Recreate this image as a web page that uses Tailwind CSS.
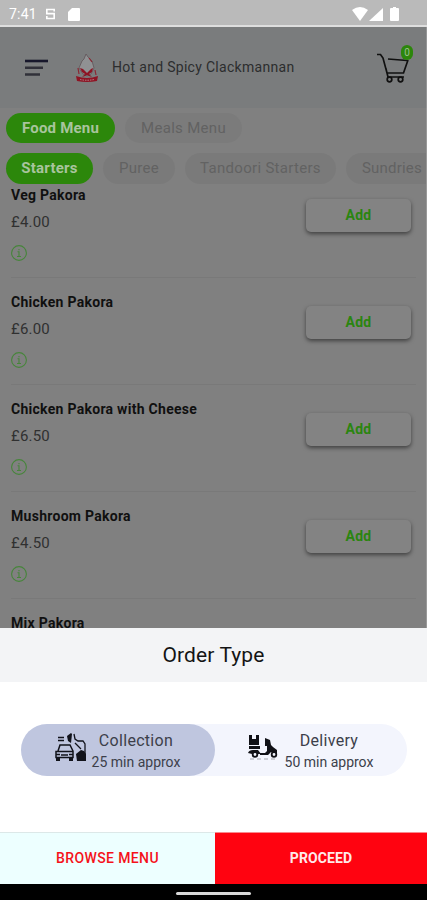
<!DOCTYPE html>
<html lang="en">

<head>
  <meta charset="UTF-8">
  <meta name="viewport" content="width=device-width, initial-scale=1.0">
  <title>Hot and Spicy Clackmannan</title>
  <script src="https://cdn.jsdelivr.net/npm/@tailwindcss/browser@4"></script>
</head>

<body class="h-[900px] w-[427px] overflow-hidden bg-[#808080] font-[Roboto,sans-serif] flex flex-col">

  <!-- Status bar -->
  <div class="h-[27px] shrink-0 bg-[#bababa] border-b-2 border-[#dedede] flex items-center pl-[9px] pr-[27px] pt-[3px] text-white">
    <span class="text-[14px] leading-none tracking-[0.2px]">7:41</span>
    <svg class="ml-[9px] w-[9px] h-[12px]" viewBox="0 0 11 13" fill="none" stroke="#fff" stroke-width="2">
      <path d="M10 3.500V1H1v5h9v6H1V9" />
    </svg>
    <svg class="ml-[13px] w-[12px] h-[13px]" viewBox="0 0 12 13" fill="#fff">
      <path d="M4 0h7q1 0 1 1v11q0 1-1 1H1q-1 0-1-1V4z" />
    </svg>
    <svg class="ml-auto w-[16px] h-[14px]" viewBox="0 0 16 14" fill="#fff">
      <path d="M0 3Q8-3 16 3L8 14z" />
    </svg>
    <svg class="ml-[1px] w-[14px] h-[13px]" viewBox="0 0 14 13" fill="#fff">
      <path d="M14 0v13H0z" />
    </svg>
    <svg class="ml-[7px] mr-[1px] w-[9px] h-[14px]" viewBox="0 0 9 14" fill="#fff">
      <path d="M3 0h3v1h2q1 0 1 1v11q0 1-1 1H1q-1 0-1-1V2q0-1 1-1h2z" />
    </svg>
  </div>

  <!-- Header -->
  <header class="h-[81px] shrink-0 bg-[#7a7c7d] border-r border-[#959697] flex items-center pl-[25px] pr-[12px]">
    <svg class="w-[24px] h-[18px]" viewBox="0 0 24 18" stroke-width="2.600">
      <path d="M0 2h23" stroke="#17172b" />
      <path d="M0 8.800h18M0 15.500h15" stroke="#303039" />
    </svg>
    <svg class="ml-[26px] w-[24px] h-[30px]" viewBox="0 0 24 30">
      <path d="M9 6l2-5 2 3 4 4 2 7-3 6-4 2-4-2-4-6 3-7z" fill="#909193" stroke="#5b4e52" stroke-width=".7" />
      <path d="M14 5l3 4M3 15l1 6M20 17l1 5" stroke="#8c2733" stroke-width="1.200" />
      <path d="M5 15l3 1 4 4 4-4 2-1-1 4-3 2 3 3-3-1-2-1-2 1-3 1 3-3-3-2z" fill="#8e1424" />
      <path d="M1 23q11 4 22 0l-1 5q-10 2-20 0z" fill="#8e1424" />
      <path d="M5 26.500q7 1.500 14 0" stroke="#b9a0a4" stroke-width=".8" stroke-dasharray="1.500 1" fill="none" />
    </svg>
    <span class="ml-[13px] text-[14px] tracking-[0.3px] text-[#2c2d2e] whitespace-nowrap">Hot and Spicy Clackmannan</span>
    <div class="relative ml-auto w-[37px] h-[40px]">
      <svg class="w-[37px] h-[40px]" viewBox="0 0 37 40" fill="none" stroke="#101010" stroke-width="1.700">
        <path d="M0 6.500h3.500L6 10l4 15h16.500L31 12M11 11l19 1.500M9 21l2 8h16" />
        <circle cx="12.500" cy="31.500" r="2.300" />
        <circle cx="23.500" cy="31.500" r="2.300" />
      </svg>
      <span class="absolute left-[24px] -top-[3px] w-[12px] h-[15px] rounded-full bg-[#2c860b] text-[#9bbd8f] text-[10px] leading-[15px] text-center">0</span>
    </div>
  </header>

  <!-- Menu tabs -->
  <nav class="h-[77px] shrink-0 overflow-hidden border-r border-[#999] pt-[5px] pl-[6px] flex flex-col gap-[10px] text-[15px] leading-[30px] text-[#626262] whitespace-nowrap">
    <div class="flex gap-[10px]">
      <span class="w-[109px] h-[30px] shrink-0 rounded-full bg-[#2c870b] text-[#a8c49d] font-bold tracking-[0.2px] text-center">Food Menu</span>
      <span class="w-[117px] h-[30px] shrink-0 rounded-full bg-[#7b7b7b] tracking-[0.3px] text-center">Meals Menu</span>
    </div>
    <div class="flex gap-[10px] leading-[31px]">
      <span class="w-[87px] h-[31px] shrink-0 rounded-full bg-[#2c870b] text-[#a8c49d] font-bold tracking-[0.25px] text-center">Starters</span>
      <span class="w-[72px] h-[31px] shrink-0 rounded-full bg-[#7a7a7a] tracking-[0.3px] text-center">Puree</span>
      <span class="w-[151px] h-[31px] shrink-0 rounded-full bg-[#7a7a7a] tracking-[0.3px] text-center">Tandoori Starters</span>
      <span class="w-[100px] h-[31px] shrink-0 rounded-full bg-[#7a7a7a] tracking-[0.2px] pl-[16px]">Sundries</span>
    </div>
  </nav>

  <!-- Menu items -->
  <main id="items" class="h-[443px] shrink-0 overflow-hidden border-r border-[#999]"></main>

  <template id="item">
    <div class="h-[107px] ml-[11px] mr-[10px] border-b border-[#797979] flex justify-between first:-mt-[14px] last:h-auto last:border-0">
      <div class="pt-[15px]">
        <h3 class="text-[14px] leading-[18px] font-bold tracking-[0.28px] text-[#101010] whitespace-nowrap"></h3>
        <p class="mt-[8px] text-[15px] leading-[20px] tracking-[0.2px] text-[#303030]"></p>
        <svg class="mt-[13px] w-[16px] h-[16px]" viewBox="0 0 16 16" fill="none" stroke="#46853a" stroke-width="1.100">
          <circle cx="8" cy="8" r="7.400" />
          <path d="M6.500 6.800H8v4.700M6 11.500h4M8 4v1.300" />
        </svg>
      </div>
      <button class="mt-[28px] mr-[5px] w-[105px] h-[33px] rounded-[5px] bg-[#838383] text-[14px] font-bold tracking-[0.2px] text-[#2a850f] shadow-[0_2px_4px_rgba(0,0,0,0.5)]">Add</button>
    </div>
  </template>

  <!-- Order type sheet -->
  <section class="h-[204px] shrink-0 bg-white flex flex-col">
    <h2 class="h-[54px] bg-[#f3f4f6] text-[21px] leading-[54px] tracking-[0.1px] text-center text-[#141414]">Order Type</h2>
    <div class="mt-[42px] ml-[21px] w-[386px] h-[52px] rounded-full bg-[#f3f5fd] flex text-[#3c3f4a]">
      <div class="w-[194px] rounded-full bg-[#bfc6df] flex items-center pl-[33px]">
        <svg class="w-[33px] h-[32px] -mt-[6px]" viewBox="0 0 33 32" fill="none" stroke="#11131b" stroke-width="1.500">
          <path d="M4 6.500h6M4 9.500h6" />
          <path d="M17 2l-4 3 1 5 3 2 1-9z" fill="#11131b" stroke="none" />
          <path d="M20 3l1 5 3 2h5l2 3v10M21 12l6 6" stroke-width="1.300" />
          <path d="M4 20l2-6h10l3 6" />
          <path d="M2 20.500h17v6H2zM2 23.500h4M15 23.500h4M7 24h7" />
          <path d="M2 27h4v3H2zM15 27h4v3h-4z" fill="#11131b" stroke="none" />
          <path d="M22 23l5-4 3 1 2 3v7h-9z" fill="#11131b" stroke="none" />
        </svg>
        <div class="ml-[4px] w-[90px] pt-[1px] text-center whitespace-nowrap">
          <p class="text-[16px] leading-[22px] tracking-[0.3px]">Collection</p>
          <p class="text-[14px] leading-[20px]">25 min approx</p>
        </div>
      </div>
      <div class="flex items-center pl-[33px]">
        <svg class="w-[31px] h-[27px] -mt-[6px]" viewBox="0 0 31 27" fill="#101116">
          <path d="M1 1h3v4h4V1h3v10H1zM1 12h11v3H1z" />
          <path d="M17 4l5 2 1 5 2 2 4 3v3h-3l-3-1-3 3h-8v-2h5l2-2v-5h-2z" />
          <path d="M0 19q1-3 5-3h5l3 4h-3l-3-2-3 2z" />
          <g fill="#f3f5fd" stroke="#101116" stroke-width="1.800">
            <circle cx="7" cy="20.500" r="2.300" />
            <circle cx="26" cy="20.500" r="2.300" />
          </g>
          <path d="M2 25h27" stroke="#a5a7ae" stroke-dasharray="4 3" />
        </svg>
        <div class="ml-[5px] w-[90px] pt-[1px] text-center whitespace-nowrap">
          <p class="text-[16px] leading-[22px] tracking-[0.3px]">Delivery</p>
          <p class="text-[14px] leading-[20px]">50 min approx</p>
        </div>
      </div>
    </div>
  </section>

  <!-- Actions -->
  <div class="h-[52px] shrink-0 flex text-[14px]">
    <button class="w-[215px] border-t border-[#dce8e8] bg-[#edffff] font-medium tracking-[0.38px] text-[#f5121a]">BROWSE MENU</button>
    <button class="flex-1 border-t border-[#f98a8e] bg-[#ff0310] font-bold tracking-[0.1px] text-[#ffe9ea]">PROCEED</button>
  </div>

  <!-- Navigation bar -->
  <div class="h-[16px] shrink-0 bg-black flex justify-center pt-[8px]">
    <div class="w-[75px] h-[3px] rounded-full bg-[#d9d9d9]"></div>
  </div>

  <script>
    const items = [
      ["Veg Pakora", "£4.00"],
      ["Chicken Pakora", "£6.00"],
      ["Chicken Pakora with Cheese", "£6.50"],
      ["Mushroom Pakora", "£4.50"],
      ["Mix Pakora"],
    ];
    const list = document.getElementById("items");
    const template = document.getElementById("item");

    items.forEach(([name, price]) => {
      const row = template.content.cloneNode(true);
      row.querySelector("h3").textContent = name;
      if (price) {
        row.querySelector("p").textContent = price;
      } else {
        // only the name shows above the sheet
        row.querySelectorAll("p, svg, button").forEach((el) => el.remove());
      }
      list.appendChild(row);
    });
  </script>
</body>

</html>
